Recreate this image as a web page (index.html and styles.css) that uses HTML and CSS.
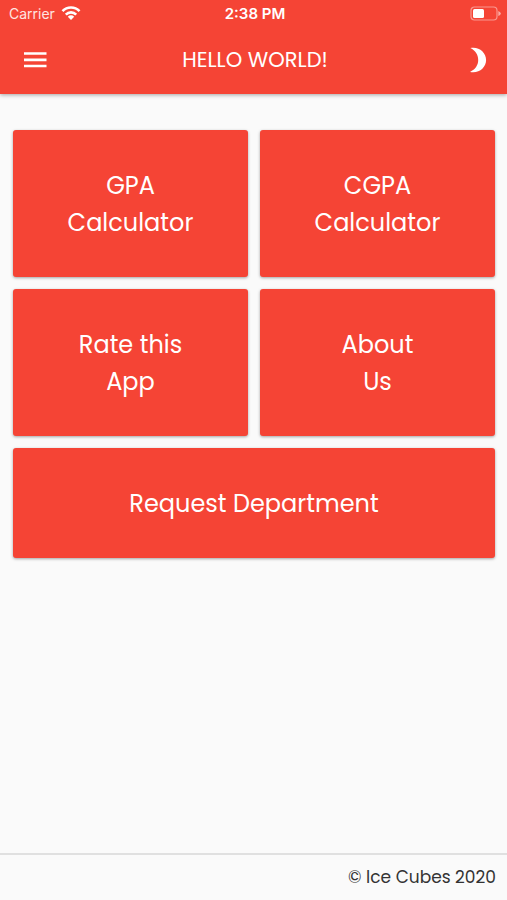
FILE: index.html
```html
<!DOCTYPE html>
<html lang="en">
<head>
<meta charset="utf-8">
<meta name="viewport" content="width=device-width, initial-scale=1">
<title>Hello World!</title>
<link rel="stylesheet" href="styles.css">
</head>
<body>
<header class="header">
  <div class="status">
    <span class="carrier">Carrier
      <svg class="wifi" width="20" height="16" viewBox="0 0 20 16" aria-hidden="true">
        <g fill="none" stroke="currentColor" stroke-width="2.6">
          <path d="M1.5 5.2C6.2 .3 13.8 .3 18.5 5.2"/>
          <path d="M4.8 8.6C7.8 5.6 12.2 5.6 15.2 8.6"/>
        </g>
        <path d="M6.8 10.7C8.6 8.9 11.4 8.9 13.2 10.7L10 14.1Z" fill="currentColor"/>
      </svg>
    </span>
    <span class="time">2:38 PM</span>
    <svg class="battery" width="31" height="15" viewBox="0 0 31 15" aria-hidden="true">
      <rect x="1" y="1" width="26" height="13" rx="3.5" fill="none" stroke="currentColor" stroke-opacity=".45" stroke-width="1.2"/>
      <rect x="3" y="3" width="11" height="9" rx="1.5" fill="currentColor"/>
      <path d="M28.3 5Q30.8 6 30.8 7.5T28.3 10Z" fill="currentColor" fill-opacity=".55"/>
    </svg>
  </div>
  <div class="toolbar">
    <button class="icon-button" type="button" aria-label="Menu">
      <svg width="24" height="18" viewBox="0 0 24 18" aria-hidden="true">
        <path d="M1 2.5h22.5M1 8.9h22.5M1 15h22.5" stroke="currentColor" stroke-width="2.6"/>
      </svg>
    </button>
    <h1 class="title">HELLO WORLD!</h1>
    <button class="icon-button" type="button" aria-label="Dark mode">
      <svg width="18" height="26" viewBox="0 0 18 26" aria-hidden="true">
        <path d="M1.4 1.1C9.6 -0.7 17.1 5.2 17.1 13.1C17.1 21 9.6 26.8 1 24.9C6.4 22.6 9.2 18.2 9.2 13.1C9.2 8 6.4 3.5 1.4 1.1Z" fill="currentColor"/>
      </svg>
    </button>
  </div>
</header>
<main class="tiles">
  <button class="tile" type="button">GPA<br>Calculator</button>
  <button class="tile" type="button">CGPA<br>Calculator</button>
  <button class="tile" type="button">Rate this<br>App</button>
  <button class="tile" type="button">About<br>Us</button>
  <button class="tile tile-wide" type="button">Request Department</button>
</main>
<footer class="footer">© Ice Cubes 2020</footer>
</body>
</html>
```
FILE: styles.css
```css
* {
  box-sizing: border-box;
}

body {
  display: flex;
  flex-direction: column;
  min-height: 100vh;
  margin: 0;
  background: #fafafa;
  font-family: Poppins, Inter, sans-serif;
}

button {
  border: 0;
  color: inherit;
  font: inherit;
  cursor: pointer;
}

.header {
  background: #f54435;
  box-shadow: 0 1px 4px rgba(0, 0, 0, 0.35);
  color: #fff;
}

.status {
  display: grid;
  grid-template-columns: 1fr auto 1fr;
  align-items: center;
  height: 27px;
  padding: 0 6px 0 9px;
  font-family: Inter, sans-serif;
  font-size: 14px;
}

.carrier {
  display: flex;
  align-items: center;
  gap: 6px;
  color: #ffe4e1;
}

.wifi {
  color: #fff;
}

.time {
  font-size: 15px;
  font-weight: 600;
  line-height: 20px;
}

.battery {
  justify-self: end;
}

.toolbar {
  display: grid;
  grid-template-columns: 1fr auto 1fr;
  align-items: center;
  height: 67px;
  padding: 0 15px 2px 18px;
}

.icon-button {
  display: flex;
  justify-self: start;
  padding: 5px;
  background: none;
}

.icon-button:last-child {
  justify-self: end;
}

.title {
  margin: 0;
  font-size: 21px;
  font-weight: 400;
}

.tiles {
  display: grid;
  grid-template-columns: 1fr 1fr;
  gap: 12px;
  padding: 36px 12px 36px 13px;
}

.tile {
  padding: 37px 16px 36px;
  border-radius: 3px;
  background: #f54435;
  box-shadow: 0 1px 3px rgba(0, 0, 0, 0.35);
  color: #fff;
  font-size: 24px;
  line-height: 37px;
}

.tile-wide {
  grid-column: span 2;
}

.footer {
  margin-top: auto;
  padding: 10px 11px;
  border-top: 2px solid #e0e0e0;
  color: #333;
  font-size: 17px;
  line-height: 25px;
  text-align: right;
}
```
